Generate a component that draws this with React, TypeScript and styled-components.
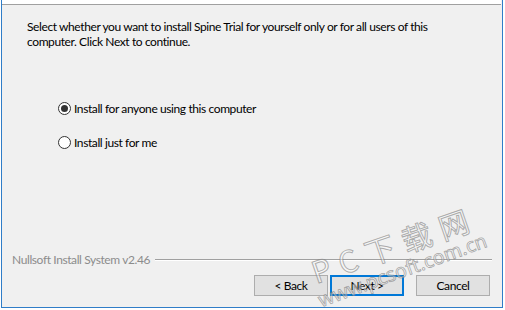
import styled, { createGlobalStyle } from "styled-components";

const Global = createGlobalStyle`
  html, body {
    margin: 0;
    background: #ffffff;
  }
  body {
    font-family: Lato, "Noto Sans", sans-serif;
  }
`;

const Window = styled.div`
  position: relative;
  box-sizing: border-box;
  width: 502px;
  height: 308px;
  margin-left: 1px;
  background: #f0f0f0;
  border: 1px solid #2f7dc8;
  border-top: none;
  display: flex;
  flex-direction: column;
  overflow: hidden;
  font-size: 12px;
  letter-spacing: -0.4px;
  color: #000;
`;

const HeaderTail = styled.div`
  height: 4px;
  background: #ffffff;
  border-bottom: 1px solid #a0a0a0;
  margin-right: 1px;
`;

const Intro = styled.p`
  margin: 14px 0 0 25px;
  line-height: 15px;
  width: 440px;
`;

const Options = styled.div`
  display: flex;
  flex-direction: column;
  gap: 19px;
  margin: 52px 0 0 56px;
`;

const Option = styled.label`
  display: flex;
  align-items: center;
  gap: 3px;
  height: 15px;
`;

const Radio = styled.span<{ $checked?: boolean }>`
  position: relative;
  box-sizing: border-box;
  width: 13px;
  height: 13px;
  border-radius: 50%;
  border: 1px solid #333333;
  background: #ffffff;

  &::after {
    content: "";
    display: ${(p) => (p.$checked ? "block" : "none")};
    position: absolute;
    left: 2px;
    top: 2px;
    width: 7px;
    height: 7px;
    border-radius: 50%;
    background: #333333;
  }
`;

const Brand = styled.div`
  margin: auto 10px 0 10px;
  display: flex;
  align-items: center;
  gap: 5px;
  color: #8c8c8c;
`;

const Etch = styled.div`
  flex: 1;
  height: 1px;
  background: #a0a0a0;
  border-bottom: 1px solid #ffffff;
`;

const Buttons = styled.div`
  display: flex;
  justify-content: flex-end;
  padding: 8px 12px 11px 0;
`;

const Button = styled.button<{ $default?: boolean; $gap?: number }>`
  box-sizing: border-box;
  width: 74px;
  height: 21px;
  margin-left: ${(p) => p.$gap ?? 0}px;
  padding: 0;
  font: inherit;
  letter-spacing: inherit;
  color: #000;
  background: #e1e1e1;
  border: 1px solid ${(p) => (p.$default ? "#0078d7" : "#adadad")};
  box-shadow: ${(p) => (p.$default ? "inset 0 0 0 1px #0078d7" : "none")};
`;

const Watermark = styled.div`
  position: absolute;
  pointer-events: none;
  line-height: 1;
  letter-spacing: 0;
  color: rgba(255, 255, 255, 0.45);
  -webkit-text-stroke: 1px rgba(110, 110, 110, 0.55);
  transform-origin: left bottom;
  white-space: nowrap;
`;

const WatermarkTitle = styled(Watermark)`
  left: 315px;
  top: 256px;
  font-size: 30px;
  letter-spacing: 9px;
  font-family: "Noto Sans CJK SC", "Noto Sans", sans-serif;
  transform: rotate(-19deg);
`;

const WatermarkUrl = styled(Watermark)`
  left: 320px;
  top: 290px;
  font-size: 19.5px;
  font-family: "Noto Sans", sans-serif;
  -webkit-text-stroke: 0.8px rgba(110, 110, 110, 0.6);
  transform: rotate(-20deg);
`;

export default function App() {
  return (
    <>
      <Global />
      <Window>
        <HeaderTail />
        <Intro>
          Select whether you want to install Spine Trial for yourself only or for all users of this
          computer. Click Next to continue.
        </Intro>
        <Options>
          <Option>
            <Radio $checked />
            Install for anyone using this computer
          </Option>
          <Option>
            <Radio />
            Install just for me
          </Option>
        </Options>
        <Brand>
          Nullsoft Install System v2.46
          <Etch />
        </Brand>
        <Buttons>
          <Button>&lt; Back</Button>
          <Button $default $gap={2}>Next &gt;</Button>
          <Button $gap={12}>Cancel</Button>
        </Buttons>
        <WatermarkTitle>PC下载网</WatermarkTitle>
        <WatermarkUrl>www.pcsoft.com.cn</WatermarkUrl>
      </Window>
    </>
  );
}
